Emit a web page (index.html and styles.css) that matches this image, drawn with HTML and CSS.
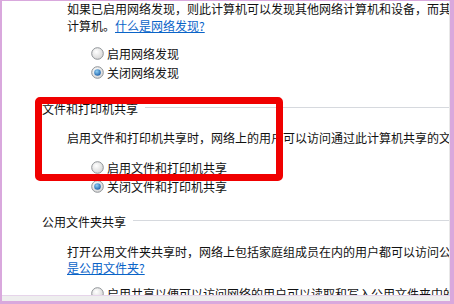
FILE: index.html
```html
<!DOCTYPE html>
<html lang="zh-CN">
<head>
<meta charset="utf-8">
<link rel="stylesheet" href="styles.css">
</head>
<body>
<div class="frame">
  <div class="content">
    <p class="desc first">如果已启用网络发现，则此计算机可以发现其他网络计算机和设备，而其他网络计算机也可以发现此<br>计算机。<a class="link" href="#">什么是网络发现?</a></p>
    <div class="radios r1">
      <div class="radio"><svg class="rb" viewBox="0 0 13 13"><defs><radialGradient id="g1" cx="0.4" cy="0.35" r="0.7"><stop offset="0" stop-color="#ffffff"/><stop offset="1" stop-color="#d4d4d4"/></radialGradient></defs><circle cx="6.5" cy="6.5" r="5.8" fill="url(#g1)" stroke="#8f9397" stroke-width="1"/></svg><span>启用网络发现</span></div>
      <div class="radio"><svg class="rb" viewBox="0 0 13 13"><defs><radialGradient id="g2" cx="0.4" cy="0.35" r="0.7"><stop offset="0" stop-color="#ffffff"/><stop offset="1" stop-color="#d4d4d4"/></radialGradient><radialGradient id="d2" cx="0.4" cy="0.35" r="0.7"><stop offset="0" stop-color="#8fd0f5"/><stop offset="1" stop-color="#1a5da8"/></radialGradient></defs><circle cx="6.5" cy="6.5" r="5.8" fill="url(#g2)" stroke="#8f9397" stroke-width="1"/><circle cx="6.5" cy="6.5" r="3.3" fill="url(#d2)"/></svg><span>关闭网络发现</span></div>
    </div>

    <div class="heading h1"><span>文件和打印机共享</span><div class="rule"></div></div>
    <p class="desc d2">启用文件和打印机共享时，网络上的用户可以访问通过此计算机共享的文件和打印机。</p>
    <div class="radios r2">
      <div class="radio"><svg class="rb" viewBox="0 0 13 13"><defs><radialGradient id="g3" cx="0.4" cy="0.35" r="0.7"><stop offset="0" stop-color="#ffffff"/><stop offset="1" stop-color="#d4d4d4"/></radialGradient></defs><circle cx="6.5" cy="6.5" r="5.8" fill="url(#g3)" stroke="#8f9397" stroke-width="1"/></svg><span>启用文件和打印机共享</span></div>
      <div class="radio"><svg class="rb" viewBox="0 0 13 13"><defs><radialGradient id="g4" cx="0.4" cy="0.35" r="0.7"><stop offset="0" stop-color="#ffffff"/><stop offset="1" stop-color="#d4d4d4"/></radialGradient><radialGradient id="d4" cx="0.4" cy="0.35" r="0.7"><stop offset="0" stop-color="#8fd0f5"/><stop offset="1" stop-color="#1a5da8"/></radialGradient></defs><circle cx="6.5" cy="6.5" r="5.8" fill="url(#g4)" stroke="#8f9397" stroke-width="1"/><circle cx="6.5" cy="6.5" r="3.3" fill="url(#d4)"/></svg><span>关闭文件和打印机共享</span></div>
    </div>

    <div class="heading h2"><span>公用文件夹共享</span><div class="rule"></div></div>
    <p class="desc d3">打开公用文件夹共享时，网络上包括家庭组成员在内的用户都可以访问公用文件夹中的文件。什么<br><a class="link" href="#">是公用文件夹?</a></p>
    <div class="radios r3">
      <div class="radio"><svg class="rb" viewBox="0 0 13 13"><defs><radialGradient id="g5" cx="0.4" cy="0.35" r="0.7"><stop offset="0" stop-color="#ffffff"/><stop offset="1" stop-color="#d4d4d4"/></radialGradient></defs><circle cx="6.5" cy="6.5" r="5.8" fill="url(#g5)" stroke="#8f9397" stroke-width="1"/></svg><span>启用共享以便可以访问网络的用户可以读取和写入公用文件夹中的文件</span></div>
    </div>

    <div class="callout"></div>
  </div>
  <div class="statusbar"></div>
</div>
</body>
</html>
```

FILE: styles.css
```css
html, body {
  margin: 0;
  padding: 0;
  background: #ffffff;
}

body {
  width: 454px;
  height: 304px;
  overflow: hidden;
  font-family: "Noto Sans CJK SC", "Microsoft YaHei", sans-serif;
  font-size: 12px;
  color: #111111;
}

.frame {
  box-sizing: border-box;
  width: 454px;
  height: 304px;
  border-top: 1px solid #d9a8dd;
  border-left: 2px solid #d9a8dd;
  border-right: 4px solid #d9a8dd;
  border-bottom: 3px solid #d9a8dd;
  display: flex;
  flex-direction: column;
  background: #ffffff;
}

.content {
  position: relative;
  flex: 1;
  overflow: hidden;
  border-right: 1px solid #e8e8e8;
}

.statusbar {
  height: 5px;
  background: #eeeeee;
  border-top: 1px solid #e6d4ea;
}

.desc {
  margin: 0 0 0 65px;
  line-height: 17px;
  white-space: nowrap;
}

.desc.first {
  margin-top: -1px;
}

.link {
  color: #0a64c8;
  text-decoration: underline;
}

.radios {
  margin-left: 89px;
  display: flex;
  flex-direction: column;
}

.radio {
  display: flex;
  align-items: center;
  height: 19px;
  white-space: nowrap;
  gap: 3px;
}

.rb {
  width: 13px;
  height: 13px;
  flex: none;
}

.r1 { margin-top: 10px; }

.heading {
  display: flex;
  align-items: center;
  margin-left: 40px;
  height: 17px;
  white-space: nowrap;
}

.heading .rule {
  flex: 1;
  height: 1px;
  background: #d6d9de;
  margin-left: 7px;
  margin-top: -3px;
}

.h1 { margin-top: 18px; }
.d2 { margin-top: 12px; }
.r2 { margin-top: 12px; }
.h2 { margin-top: 17px; }
.d3 { margin-top: 14px; line-height: 16px; }
.r3 { margin-top: 8px; }

.callout {
  position: absolute;
  left: 33px;
  top: 96px;
  width: 248px;
  height: 84px;
  box-sizing: border-box;
  border: 7px solid #f00000;
  border-radius: 5px;
}
```
